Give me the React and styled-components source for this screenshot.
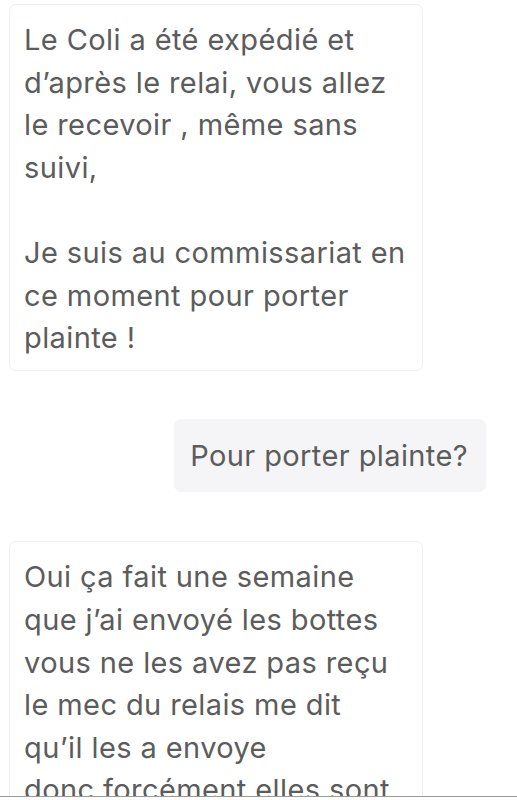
import React from "react";
import styled, { createGlobalStyle } from "styled-components";

const Global = createGlobalStyle`
  html, body { margin: 0; padding: 0; background: #ffffff; }
  body { font-family: Inter, "Noto Sans", sans-serif; }
`;

const Page = styled.div`
  width: 517px;
  height: 800px;
  overflow: hidden;
  position: relative;
  background: #ffffff;
  box-sizing: border-box;
`;

const Thread = styled.div`
  display: flex;
  flex-direction: column;
  padding: 4px 0 0 9px;
`;

const Bubble = styled.div`
  align-self: ${(p) => (p.$mine ? "flex-end" : "flex-start")};
  box-sizing: border-box;
  width: ${(p) => (p.$mine ? "auto" : "414px")};
  margin-right: ${(p) => (p.$mine ? "31px" : "0")};
  margin-top: ${(p) => p.$gap || 0}px;
  padding: ${(p) => (p.$mine ? "15px 17px 14px 15px" : "14px 8px 10px 14px")};
  background: ${(p) => (p.$mine ? "#f5f5f7" : "#ffffff")};
  border: 1px solid ${(p) => (p.$mine ? "#f5f5f7" : "#efefef")};
  border-radius: 7px;
  color: #5c5c5c;
  font-size: 29px;
  line-height: 42.6px;
  white-space: pre-line;
  letter-spacing: 0.4px;
`;

const BottomRule = styled.div`
  position: absolute;
  left: 0;
  right: 0;
  bottom: 0;
  height: 3px;
  background: #ffffff;
  border-top: 1px solid #9a9a9a;
`;

export default function App() {
  return (
    <Page>
      <Global />
      <Thread>
        <Bubble>
          {"Le Coli a été expédié et\nd’après le relai, vous allez\nle recevoir , même sans\nsuivi,\n\nJe suis au commissariat en\nce moment pour porter\nplainte !"}
        </Bubble>
        <Bubble $mine $gap={48}>Pour porter plainte?</Bubble>
        <Bubble $gap={49}>
          {"Oui ça fait une semaine\nque j’ai envoyé les bottes\nvous ne les avez pas reçu\nle mec du relais me dit\nqu’il les a envoye\ndonc forcément elles sont\nau relais"}
        </Bubble>
      </Thread>
      <BottomRule />
    </Page>
  );
}
